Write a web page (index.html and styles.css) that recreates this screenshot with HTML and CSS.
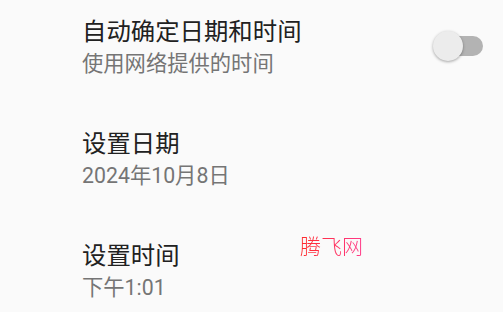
FILE: index.html
```html
<!DOCTYPE html>
<html lang="zh">
<head>
<meta charset="utf-8">
<link rel="stylesheet" href="styles.css">
</head>
<body>
<div class="list">
  <div class="item">
    <div class="texts">
      <div class="title">自动确定日期和时间</div>
      <div class="summary">使用网络提供的时间</div>
    </div>
    <div class="switch"><div class="thumb"></div></div>
  </div>
  <div class="item">
    <div class="texts">
      <div class="title">设置日期</div>
      <div class="summary">2024年10月8日</div>
    </div>
  </div>
  <div class="item">
    <div class="texts">
      <div class="title">设置时间</div>
      <div class="summary">下午1:01</div>
    </div>
  </div>
</div>
<div class="watermark">腾飞网</div>
</body>
</html>
```
FILE: styles.css
```css
html, body {
  margin: 0;
  padding: 0;
  background: #fafafa;
  width: 503px;
  height: 312px;
  overflow: hidden;
  font-family: Roboto, "Noto Sans CJK SC", sans-serif;
}
.list {
  display: flex;
  flex-direction: column;
  gap: 48px;
  padding: 16px 20px 0 82px;
}
.item {
  display: flex;
  align-items: center;
  height: 64px;
}
.texts {
  flex: 1;
}
.title {
  font-size: 24.4px;
  line-height: 32px;
  color: #212121;
}
.summary {
  font-size: 21.3px;
  line-height: 32px;
  color: #757575;
}
.switch {
  position: relative;
  width: 34px;
  height: 20px;
  border-radius: 10px;
  background: #b3b3b3;
  margin-top: -4px;
}
.thumb {
  position: absolute;
  left: -16px;
  top: -5px;
  width: 30px;
  height: 30px;
  border-radius: 50%;
  background: #ececec;
  box-shadow: 0 1px 3px rgba(0,0,0,0.35);
}
.watermark {
  position: absolute;
  left: 300px;
  top: 231px;
  font-family: "Noto Sans CJK SC", sans-serif;
  font-weight: 300;
  font-size: 21px;
  line-height: 28px;
  background: linear-gradient(90deg, #ff2a2a, #ff3a8a);
  -webkit-background-clip: text;
  background-clip: text;
  color: transparent;
}
```
